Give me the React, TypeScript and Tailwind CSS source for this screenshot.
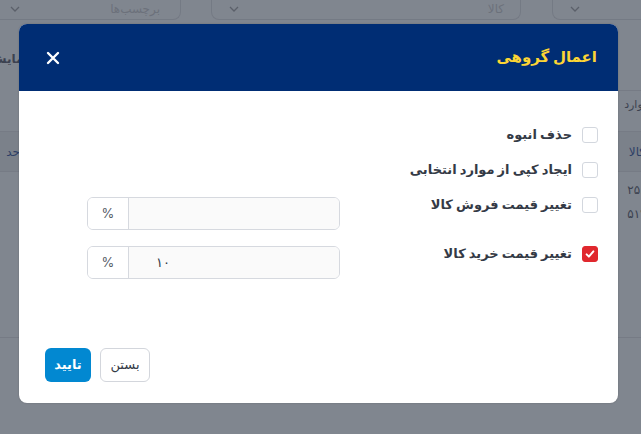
import React, { useState } from 'react';

const font = { fontFamily: "Inter, 'DejaVu Sans', sans-serif" };

const Checkbox: React.FC<{ checked?: boolean; onChange?: () => void }> = ({ checked, onChange }) => (
  <button
    onClick={onChange}
    className={`w-4 h-4 shrink-0 rounded-[3px] border flex items-center justify-center ${
      checked ? 'bg-[#e0282e] border-[#e0282e]' : 'bg-white border-[#d3d7de]'
    }`}
  >
    {checked && (
      <svg viewBox="0 0 16 16" className="w-3 h-3" fill="none" stroke="white" strokeWidth="2.6" strokeLinecap="round" strokeLinejoin="round">
        <path d="M3.5 8.5l3 3 6-7" />
      </svg>
    )}
  </button>
);

const PercentInput: React.FC<{ value: string }> = ({ value }) => (
  <div dir="ltr" className="flex w-[253px] h-[33px] rounded-md border border-[#d6d9df] overflow-hidden">
    <div className="w-[41px] flex items-center justify-center bg-white border-r border-[#d6d9df] text-[13px] text-[#555b66]">%</div>
    <div className="flex-1 bg-[#fafafa] flex items-center pl-[27px] text-[13px] text-[#333a48]">{value}</div>
  </div>
);

export default function App() {
  const [checks, setChecks] = useState([false, false, false, true]);
  const toggle = (i: number) => setChecks(c => c.map((v, j) => (j === i ? !v : v)));

  return (
    <div className="relative w-full h-[434px] overflow-hidden bg-[#80868f]" style={font}>
      {/* dimmed page behind the dialog */}
      <div className="flex h-[21px] -mt-px">
        <div className="w-[189px] rounded-b-lg border border-t-0 border-[#747a84] flex items-center justify-between px-2 -ml-2">
          <svg viewBox="0 0 12 12" className="w-3 h-3 ml-2" fill="none" stroke="#5b606a" strokeWidth="1.3"><path d="M2 4l4 4 4-4" /></svg>
          <span className="text-[12px] text-[#6c717b] pr-3">برچسب‌ها</span>
        </div>
        <div className="w-[310px] ml-[30px] rounded-b-lg border border-t-0 border-[#747a84] flex items-center justify-between px-4">
          <svg viewBox="0 0 12 12" className="w-3 h-3" fill="none" stroke="#5b606a" strokeWidth="1.3"><path d="M2 4l4 4 4-4" /></svg>
          <span className="text-[12px] text-[#6c717b]">کالا</span>
        </div>
        <div className="flex-1 ml-[31px] rounded-bl-lg border border-t-0 border-r-0 border-[#747a84] flex items-center px-4">
          <svg viewBox="0 0 12 12" className="w-3 h-3" fill="none" stroke="#5b606a" strokeWidth="1.3"><path d="M2 4l4 4 4-4" /></svg>
        </div>
      </div>
      <div className="flex justify-between mt-[30px] text-[12px] text-[#3c4250]">
        <span className="-ml-[10px] font-bold">نمایش</span>
        <span />
      </div>
      <div className="absolute right-0 top-[90px] w-[24px] border-t border-[#767b85]" />
      <div className="absolute right-0 top-[96px] w-[24px] overflow-hidden text-[11px] text-[#3c4250] whitespace-nowrap" dir="rtl">
        <span className="-mr-2">موارد</span>
      </div>
      <div className="absolute right-0 top-[131px] w-[24px] h-[41px] border-y border-[#767b85] bg-[#7b818a] flex items-center text-[12px] text-[#2d3f66] overflow-hidden" dir="rtl">
        <span className="-mr-1">کالا</span>
      </div>
      <div className="absolute right-0 top-[178px] w-[24px] overflow-hidden text-[12px] leading-[24px] text-[#3c4250]" dir="rtl">
        <div className="-mr-3">۲۵۶۰</div>
        <div className="-mr-3">۵۱۲۰</div>
      </div>
      <div className="absolute left-0 top-[131px] w-[20px] h-[41px] border-y border-[#767b85] bg-[#7b818a] flex items-center text-[12px] text-[#2d3f66] overflow-hidden" dir="rtl">
        <span className="-ml-2">حد</span>
      </div>
      <div className="absolute left-0 right-0 top-[337px] border-t border-[#767b85]" />

      {/* dialog */}
      <div dir="rtl" className="absolute left-[19px] top-[24px] w-[599px] h-[379px] bg-white rounded-lg overflow-hidden flex flex-col shadow-[0_0_2px_rgba(0,0,0,0.2)]">
        <div className="h-[67px] bg-[#002d74] flex items-center justify-between pr-[21px] pl-[27px] shrink-0">
          <h2 className="text-[15px] font-bold text-[#fcd535]">اعمال گروهی</h2>
          <button className="text-white">
            <svg viewBox="0 0 14 14" className="w-[14px] h-[14px]" fill="none" stroke="currentColor" strokeWidth="2.4" strokeLinecap="round">
              <path d="M2 2l10 10M12 2L2 12" />
            </svg>
          </button>
        </div>

        <div className="flex-1 flex flex-col pr-[20px] pl-[68px] pt-[35px]">
          <label className="flex items-center gap-[10px] h-[18px]">
            <Checkbox checked={checks[0]} onChange={() => toggle(0)} />
            <span className="text-[13px] font-bold text-[#343a46]">حذف انبوه</span>
          </label>
          <label className="flex items-center gap-[10px] h-[18px] mt-[17px]">
            <Checkbox checked={checks[1]} onChange={() => toggle(1)} />
            <span className="text-[13px] font-bold text-[#343a46]">ایجاد کپی از موارد انتخابی</span>
          </label>
          <div className="flex items-start justify-between mt-[18px]">
            <label className="flex items-center gap-[10px] h-[16px]">
              <Checkbox checked={checks[2]} onChange={() => toggle(2)} />
              <span className="text-[13px] font-bold text-[#343a46]">تغییر قیمت فروش کالا</span>
            </label>
            <PercentInput value="" />
          </div>
          <div className="flex items-start justify-between mt-[16px]">
            <label className="flex items-center gap-[10px] h-[16px]">
              <Checkbox checked={checks[3]} onChange={() => toggle(3)} />
              <span className="text-[13px] font-bold text-[#343a46]">تغییر قیمت خرید کالا</span>
            </label>
            <PercentInput value="۱۰" />
          </div>
        </div>

        <div className="flex justify-end gap-[9px] pl-[26px] pb-[21px]">
          <button className="w-[50px] h-[34px] rounded-md border border-[#d3d6dc] bg-white text-[13px] text-[#343a46]">بستن</button>
          <button className="w-[46px] h-[34px] rounded-md bg-[#0288d1] text-[13px] font-bold text-white">تایید</button>
        </div>
      </div>
    </div>
  );
}
